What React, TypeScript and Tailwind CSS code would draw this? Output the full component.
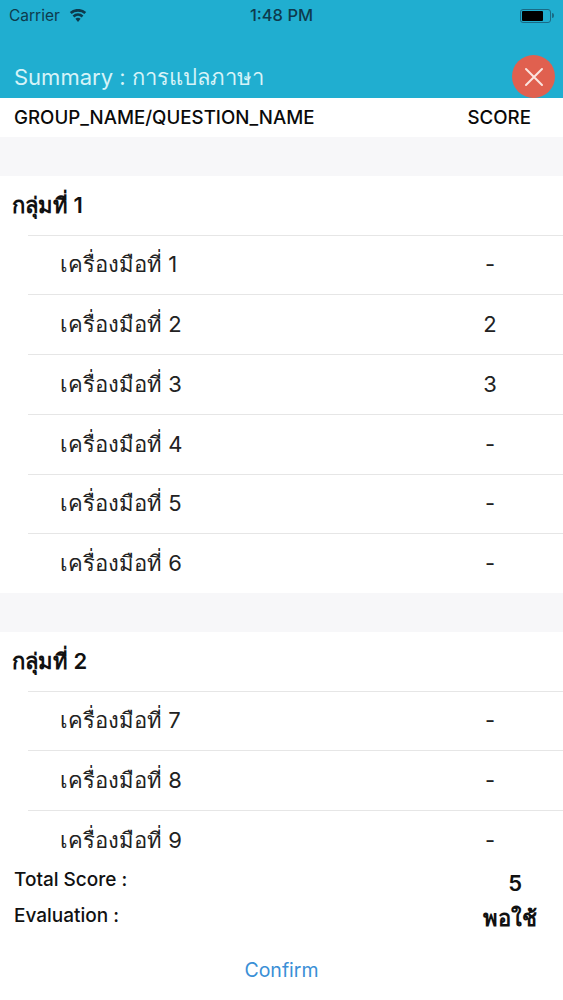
import { Fragment } from "react";

const groups = [
  {
    name: "กลุ่มที่ 1",
    items: [
      ["เครื่องมือที่ 1", "-"],
      ["เครื่องมือที่ 2", "2"],
      ["เครื่องมือที่ 3", "3"],
      ["เครื่องมือที่ 4", "-"],
      ["เครื่องมือที่ 5", "-"],
      ["เครื่องมือที่ 6", "-"],
    ],
  },
  {
    name: "กลุ่มที่ 2",
    items: [
      ["เครื่องมือที่ 7", "-"],
      ["เครื่องมือที่ 8", "-"],
      ["เครื่องมือที่ 9", "-"],
    ],
  },
];

function StatusBar() {
  return (
    <div className="flex h-[31px] items-center justify-between px-[9px] text-[#0d3a4d]">
      <div className="flex w-[160px] items-center gap-[9px] text-[15.5px]">
        <span>Carrier</span>
        <svg width="18" height="13" viewBox="0 0 18 13" fill="currentColor">
          <path d="M9 13l-2.600-3.200a4 4 0 0 1 5.200 0L9 13z" />
          <path d="M5.300 8.500L3.600 6.400a8.200 8.200 0 0 1 10.800 0L12.700 8.500a5.600 5.600 0 0 0-7.400 0z" />
          <path d="M2.600 5.100L.8 3a12.400 12.400 0 0 1 16.400 0l-1.800 2.100a9.700 9.700 0 0 0-12.800 0z" />
        </svg>
      </div>
      <span className="text-[16.5px] font-medium">1:48 PM</span>
      <div className="flex w-[160px] items-center justify-end">
        <div className="flex h-[14px] w-[31px] items-center rounded-[3px] border border-[#1a6a85] p-[1px]">
          <div className="h-full w-[21px] rounded-[1px] bg-black" />
        </div>
        <div className="ml-[1px] h-[5px] w-[1.500px] rounded-r-sm bg-[#1a6a85]" />
      </div>
    </div>
  );
}

export default function App() {
  return (
    <div className="relative flex h-[1000px] w-[563px] flex-col overflow-hidden bg-white font-['Inter','Noto_Sans',sans-serif] text-[#111]">
      <header className="h-[98px] shrink-0 bg-[#20aed0]">
        <StatusBar />
        <div className="pl-[14px] pt-[32px] text-[22px] leading-[28px] text-[#d6f3f8]">
          Summary : การแปลภาษา
        </div>
      </header>

      {/* close button hangs over the header edge */}
      <button className="absolute left-[512px] top-[55px] flex h-[43px] w-[43px] items-center justify-center rounded-full bg-[#e0604f]">
        <svg width="20" height="20" viewBox="0 0 20 20" stroke="#fbe4df" strokeWidth="2" strokeLinecap="round">
          <path d="M2 2l16 16M18 2L2 18" />
        </svg>
      </button>

      <div className="flex h-[39px] shrink-0 items-center justify-between pl-[14px] pr-[32px] pt-[2px] text-[18.7px] font-medium text-[#0a0a0a]">
        <span>GROUP_NAME/QUESTION_NAME</span>
        <span>SCORE</span>
      </div>

      <div className="min-h-0 flex-1 overflow-hidden">
        {groups.map((group) => (
          <Fragment key={group.name}>
            <div className="h-[38.5px] bg-[#f7f7f9]" />
            <div className="flex h-[59px] items-center pl-[12px] text-[22px] font-semibold">{group.name}</div>
            {group.items.map(([label, score]) => (
              <div key={label} className="ml-[28px] flex h-[59.75px] items-center border-t border-[#e6e6e6]">
                <span className="flex-1 pl-[32px] text-[22px] text-[#222]">{label}</span>
                <span className="mr-[60px] w-[26px] text-center text-[22px] text-[#222]">{score}</span>
              </div>
            ))}
          </Fragment>
        ))}
      </div>

      <footer className="h-[140px] shrink-0 bg-white">
        <div className="flex items-start justify-between pl-[14px] pr-[41px] pt-[8px]">
          <span className="text-[19px] font-medium leading-[24px]">Total Score :</span>
          <span className="text-[22px] font-semibold leading-[30px]">5</span>
        </div>
        <div className="flex items-start justify-between pl-[14px] pr-[26px] pt-[6px]">
          <span className="text-[19px] font-medium leading-[24px]">Evaluation :</span>
          <span className="-mt-[1px] text-[22px] font-bold leading-[30px]">พอใช้</span>
        </div>
        <div className="pt-[23px] text-center text-[19.5px] leading-[28px] text-[#3a8fd6]">Confirm</div>
      </footer>
    </div>
  );
}
